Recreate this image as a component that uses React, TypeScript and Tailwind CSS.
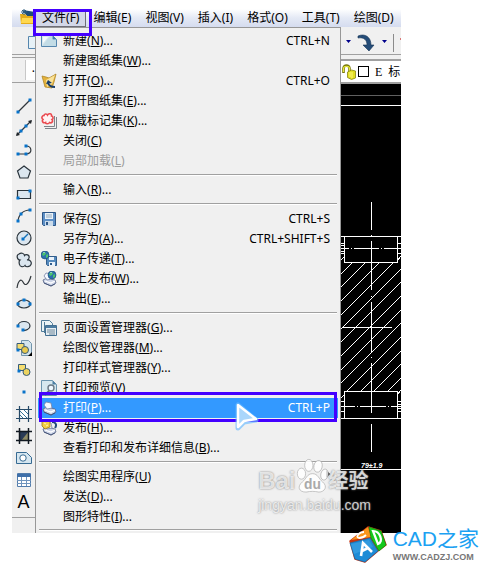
import React from 'react';

interface MenuEntry {
  label: string;
  accessKey: string;
  suffix?: string;
  shortcut?: string;
  icon?: React.ReactNode;
  disabled?: boolean;
  active?: boolean;
  submenu?: boolean;
}

interface Tool {
  name: string;
  icon: React.ReactNode;
}

const topMenus = [
  { label: '文件', accessKey: 'F' },
  { label: '编辑', accessKey: 'E' },
  { label: '视图', accessKey: 'V' },
  { label: '插入', accessKey: 'I' },
  { label: '格式', accessKey: 'O' },
  { label: '工具', accessKey: 'T' },
  { label: '绘图', accessKey: 'D' },
];

const Printer = () => (
  <>
    <path d="M2 9l4-2 8 2 1 3-5 3-7-3z" fill="#cdd5e8" stroke="#536184" strokeWidth=".8" />
    <path d="M3 5l2-3 5 1 1 5-5 1z" fill="#f5f8ff" stroke="#7583a6" strokeWidth=".8" />
    <path d="M4 10l6 2 4-2" fill="none" stroke="#fff" strokeWidth="1.2" />
    <path d="M3 12l7 3 4-2" fill="none" stroke="#3a4a70" strokeWidth=".8" />
  </>
);

const Globe = ({ x, y }: { x: number; y: number }) => (
  <g transform={`translate(${x} ${y})`}>
    <circle cx="4" cy="4" r="4" fill="#2d6fb0" stroke="#174b74" strokeWidth="0.6" />
    <path d="M1 3l2-2 2 1-1 2-2 1zM5 4l2-1v3l-2 1z" fill="#4cc36a" />
    <path d="M2 2l1-1 1 1z" fill="#dff5ff" />
  </g>
);

const NewIcon = () => (
  <>
    <path d="M.5 2.5h11l4 4v7H.5z" fill="#d9e9ef" stroke="#5586ae" />
    <path d="M1 13L9 3h2v4h4v6z" fill="#c2dce6" />
    <path d="M11.5 2.5v4h4z" fill="#3f7cad" />
    <path d="M2 4h5l-5 6z" fill="#f6fbfc" />
  </>
);

const OpenIcon = () => (
  <>
    <path d="M1 3l4 1 3 1 7-4-2 8-2 6-7-1z" fill="#e3b23c" stroke="#b1882a" strokeWidth=".8" />
    <path d="M5 7l9-5-3 9-5 3z" fill="#f9e29a" />
    <path d="M7 10c1 3 4 4 7 4" fill="none" stroke="#173d6b" strokeWidth="2" />
    <path d="M5 11l2-4 4 3z" fill="#173d6b" />
  </>
);

const MarkupIcon = () => (
  <>
    <path d="M4 15.5h11.500V4M3 13.5h10.500V3" fill="none" stroke="#7d848b" />
    <path
      d="M3 2.500c0-2 3-2 3.500-.5C8 0 11 .5 10.500 3c2 .5 2 3 .5 3.500 1.500 2-.5 4-2.500 3-1 2-4 1.500-4 0-2.500 1-4-1.500-2.500-3C0 5 1 2.500 3 2.500z"
      fill="#fff3f3"
      stroke="#ea4a50"
      strokeWidth="1.6"
    />
  </>
);

const SaveIcon = () => (
  <>
    <path d="M1.500 1.500h13v13h-12l-1-1z" fill="#5d8fc6" stroke="#2d5687" />
    <path d="M4 2h8v6H4z" fill="#eaf2f8" />
    <path d="M5 4h6M5 6h6" stroke="#91a9bf" />
    <path d="M4 10h8v5H4z" fill="#cbdbea" />
    <path d="M5 11h2v3H5z" fill="#2d5687" />
  </>
);

const TransmitIcon = () => (
  <>
    <path d="M5.500 5.500h10v9h-9l-1-1z" fill="#558abd" stroke="#315d8c" />
    <path d="M8 6h5v3H8zM8 11h6v4H8z" fill="#e9f2fa" />
    <path d="M9 12h2v2H9z" fill="#315d8c" />
    <Globe x={0} y={0} />
  </>
);

const WebIcon = () => (
  <>
    <Printer />
    <Globe x={7} y={0} />
  </>
);

const PageSetupIcon = () => (
  <>
    <path d="M.5.5h8l3 3v8H.5z" fill="#e9f3f6" stroke="#4f7b99" />
    <path d="M3.500 13V2" stroke="#4f7b99" />
    <path d="M4.500 5.500h11v10h-11z" fill="#e5edf2" stroke="#426f92" />
    <path d="M5 6h10v2H5z" fill="#4b7ca1" />
    <path d="M6 10h8M6 12h8M8 14h6" stroke="#6d879a" />
  </>
);

const PreviewIcon = () => (
  <>
    <path d="M.5.5h11l4 4v11H.5z" fill="#d6e8ef" stroke="#6a94ae" />
    <path d="M11.500.5v4h4z" fill="#4c7fa3" />
    <circle cx="10" cy="8" r="3" fill="#eef8ff" stroke="#6b7986" strokeWidth="1.400" />
    <path d="M8 11l-4 4" stroke="#596976" strokeWidth="2" />
  </>
);

const PublishIcon = () => (
  <>
    <Printer />
    <path d="M1 1l5-1 3 2 0 5-5 2-3-3z" fill="#f3cf45" stroke="#9c7811" strokeWidth=".8" />
    <path d="M3 3l2 1M5 6l2-1" stroke="#fff6b1" />
    <path d="M11 2c4 0 5 3 3 6" fill="none" stroke="#234a7c" strokeWidth="2" />
  </>
);

const menuGroups: MenuEntry[][] = [
  [
    { label: '新建', accessKey: 'N', suffix: '...', shortcut: 'CTRL+N', icon: <NewIcon /> },
    { label: '新建图纸集', accessKey: 'W', suffix: '...' },
    { label: '打开', accessKey: 'O', suffix: '...', shortcut: 'CTRL+O', icon: <OpenIcon /> },
    { label: '打开图纸集', accessKey: 'E', suffix: '...' },
    { label: '加载标记集', accessKey: 'K', suffix: '...', icon: <MarkupIcon /> },
    { label: '关闭', accessKey: 'C' },
    { label: '局部加载', accessKey: 'L', disabled: true },
  ],
  [{ label: '输入', accessKey: 'R', suffix: '...' }],
  [
    { label: '保存', accessKey: 'S', shortcut: 'CTRL+S', icon: <SaveIcon /> },
    { label: '另存为', accessKey: 'A', suffix: '...', shortcut: 'CTRL+SHIFT+S' },
    { label: '电子传递', accessKey: 'T', suffix: '...', icon: <TransmitIcon /> },
    { label: '网上发布', accessKey: 'W', suffix: '...', icon: <WebIcon /> },
    { label: '输出', accessKey: 'E', suffix: '...' },
  ],
  [
    { label: '页面设置管理器', accessKey: 'G', suffix: '...', icon: <PageSetupIcon /> },
    { label: '绘图仪管理器', accessKey: 'M', suffix: '...' },
    { label: '打印样式管理器', accessKey: 'Y', suffix: '...' },
    { label: '打印预览', accessKey: 'V', icon: <PreviewIcon /> },
    { label: '打印', accessKey: 'P', suffix: '...', shortcut: 'CTRL+P', icon: <Printer />, active: true },
    { label: '发布', accessKey: 'H', suffix: '...', icon: <PublishIcon /> },
    { label: '查看打印和发布详细信息', accessKey: 'B', suffix: '...' },
  ],
  [
    { label: '绘图实用程序', accessKey: 'U', submenu: true },
    { label: '发送', accessKey: 'D', suffix: '...' },
    { label: '图形特性', accessKey: 'I', suffix: '...' },
  ],
];

// small blue grip squares used by most of the draw tools
const Grips = ({ at }: { at: number[][] }) => (
  <>
    {at.map(([x, y]) => (
      <rect key={`${x}-${y}`} x={x - 1.5} y={y - 1.5} width="3" height="3" fill="#0873c9" />
    ))}
  </>
);

const line = { fill: 'none', stroke: '#30363b', strokeWidth: 1.2 };
const shape = { fill: '#dbe6ef', stroke: '#29333b', strokeWidth: 1.2 };

const tools: Tool[] = [
  { name: '直线', icon: <><path d="M2 14L14 2" {...line} /><Grips at={[[2, 14], [14, 2]]} /></> },
  { name: '构造线', icon: <><path d="M1 15L15 1" {...line} /><path d="M0 16l1-4 3 3zM16 0l-4 1 3 3z" fill="#20262a" /><Grips at={[[5, 11], [10, 6]]} /></> },
  { name: '多段线', icon: <><path d="M2 12h8c7 0 6-8 0-8" {...line} /><Grips at={[[2, 12], [10, 12], [10, 4]]} /></> },
  { name: '正多边形', icon: <path d="M8 2l6.500 5-2.500 7H4L1.500 7z" {...shape} /> },
  { name: '矩形', icon: <><path d="M1.500 4.500h13v8h-13z" {...shape} /><Grips at={[[2, 12], [14, 5]]} /></> },
  { name: '圆弧', icon: <><path d="M2 14C2 7 7 2 14 2" {...line} /><Grips at={[[2, 13], [5, 6], [14, 2]]} /></> },
  { name: '圆', icon: <><circle cx="8" cy="8" r="7" {...shape} /><path d="M8 8l4-4" stroke="#1672b7" strokeWidth="1.500" /><Grips at={[[7, 9]]} /></> },
  {
    name: '修订云线',
    icon: <path d="M4 8C1 8 0 3 3 2c2-1.500 5-1 5.500 1.500C10 1.500 14 3 13 6c-.3 1.500-1 2-2 2 3-.5 5 2 4 4.500-1 2.500-5 3-6 1-1.500 2-5 1.500-5.500-1C3 11 3 9 4 8z" {...shape} />,
  },
  { name: '样条曲线', icon: <path d="M1 14C2 7 5 4 7 8s5 4 8-6" {...line} /> },
  { name: '椭圆', icon: <><ellipse cx="8" cy="8" rx="6.500" ry="4" {...shape} /><Grips at={[[2, 8], [8, 4], [14, 8]]} /></> },
  { name: '椭圆弧', icon: <><path d="M2 8c0-6 12-6 12 0 0 3-4 5-8 4" {...shape} /><Grips at={[[2, 8], [7, 12]]} /></> },
  {
    name: '插入块',
    icon: <><path d="M5.500.5h7l3 3v12h-10z" fill="#d4e5ee" stroke="#7294ab" /><path d="M1 3.500h7v6H1z" fill="#f5dd70" stroke="#365b79" /><circle cx="9" cy="10" r="3.500" fill="#e9ca4c" stroke="#365b79" /><Grips at={[[2, 10]]} /><path d="M16 12v4h-4z" fill="#000" /></>,
  },
  { name: '创建块', icon: <><path d="M2.500 2.500h7v6h-7z" fill="#f5dd70" stroke="#365b79" /><circle cx="10.500" cy="10" r="3.500" fill="#ecd35f" stroke="#365b79" /><Grips at={[[3, 9]]} /></> },
  { name: '点', icon: <Grips at={[[8, 8]]} /> },
  { name: '图案填充', icon: <><path d="M3 3h10v10H3z" fill="#fff" /><path d="M3 4l9 9M3 8l5 5M7 3l6 6M3 12l1 1M11 3l2 2" stroke="#34759c" /><path d="M3.500 0v16M12.500 0v16M0 3.500h16M0 12.500h16" {...line} stroke="#254967" /></> },
  { name: '渐变色', icon: <><path d="M3 3h10v10H3z" fill="#293b56" /><path d="M13 3v10H5z" fill="#8f8c66" /><path d="M3.500 0v16M12.500 0v16M0 3.500h16M0 12.500h16" stroke="#101820" strokeWidth="1.500" /></> },
  { name: '面域', icon: <><path d="M.5 2.500h10l5 5v6H.5z" fill="#d5e6f0" stroke="#376b93" /><circle cx="7" cy="8" r="3.200" fill="#fff" stroke="#376b93" /></> },
  { name: '表格', icon: <><path d="M1.500 1.500h13v13h-13z" fill="#fff" stroke="#527cab" /><path d="M1 2h14v3H1z" fill="#3f70aa" /><path d="M1 8.500h14M1 11.500h14M5.500 5v9M10.500 5v9" stroke="#6f94bd" /></> },
];

const hatchSums = [601, 615, 628, 642, 656, 670, 683, 697, 711, 724, 738, 752, 765, 779];

function MenuRow({ entry }: { entry: MenuEntry }) {
  return (
    <li className="relative mx-[2px]">
      <button
        type="button"
        disabled={entry.disabled}
        className={`flex h-5 w-full items-center gap-1.5 pl-[3px] pr-2 text-left whitespace-nowrap ${
          entry.active ? 'bg-[#3399ff] text-white' : entry.disabled ? 'text-[#9d9d9d]' : 'text-black'
        }`}
      >
        <svg viewBox="0 0 16 16" className="size-4 shrink-0" aria-hidden="true">
          {entry.icon}
        </svg>
        <span className="flex-1">
          {entry.label}(<u className="underline-offset-1">{entry.accessKey}</u>){entry.suffix}
        </span>
        {entry.shortcut && <span>{entry.shortcut}</span>}
        {entry.submenu && (
          <svg viewBox="0 0 4 8" className="mb-1.5 h-2 w-1" aria-hidden="true">
            <path d="M0 0l4 4-4 4z" />
          </svg>
        )}
      </button>
      {entry.active && (
        <>
          <div className="pointer-events-none absolute inset-x-px -top-1.5 -bottom-1 z-10 border-3 border-[#4400ff]" />
          <svg viewBox="0 0 28 32" className="absolute top-1 right-[76px] z-20 h-8 w-7" aria-hidden="true">
            <path d="M4 3v23l6-6 12-2z" fill="none" stroke="#69baff" strokeWidth="5" strokeLinejoin="round" opacity=".65" />
            <path d="M4 3v22l6-6 12-2z" fill="#a9d6fb" stroke="#fff" strokeWidth="2.500" strokeLinejoin="round" />
          </svg>
        </>
      )}
    </li>
  );
}

function FileMenu() {
  return (
    <div className="min-w-0 flex-1 border-x border-t border-[#979797] bg-[#f0f0f0] pt-[3px]">
      {menuGroups.map((group, index) => (
        <React.Fragment key={index}>
          <ul>
            {group.map((entry) => (
              <MenuRow key={entry.label} entry={entry} />
            ))}
          </ul>
          <div className={index === menuGroups.length - 1 ? 'h-1.5 px-[3px] pt-0.5' : 'h-[9px] px-[3px] pt-[3px]'}>
            <div className="h-0.5 border-t border-b border-t-[#a0a0a0] border-b-white" />
          </div>
        </React.Fragment>
      ))}
    </div>
  );
}

function ToolPalette() {
  return (
    <div className="flex w-[23px] shrink-0 flex-col bg-[#f0f0f0]">
      <div className="flex h-7 items-center justify-end border-b border-[#a0a0a0] pt-1">
        <svg viewBox="0 0 7 14" className="h-3.5 w-[7px]" aria-hidden="true">
          <path d="M7 .5H.5v12H7" fill="#e6f1f6" stroke="#5586ae" />
        </svg>
      </div>
      <div className="mt-0.5 flex h-[26px] items-center justify-end border-y border-[#a0a0a0]">
        <div className="h-5 w-2.5 border-l border-[#c8c8c8] bg-white text-right leading-4">.</div>
      </div>
      <div className="flex flex-col items-center border-b border-[#a0a0a0] pt-3 pb-1">
        {tools.map(({ name, icon }) => (
          <button key={name} type="button" aria-label={name} className="flex h-[22px] items-center">
            <svg viewBox="0 0 16 16" className="size-4">
              {icon}
            </svg>
          </button>
        ))}
        <button type="button" className="h-[22px] font-['Liberation_Sans',sans-serif] text-lg leading-[22px]">
          A
        </button>
      </div>
    </div>
  );
}

function Drawing() {
  return (
    <svg viewBox="341 84 60 449" className="h-[449px] w-full" preserveAspectRatio="xMidYMin slice" shapeRendering="crispEdges">
      <defs>
        <clipPath id="hatch">
          <path d="M341 262h60v129h-60z" />
        </clipPath>
      </defs>
      <path d="M341 84h60v449h-60z" />
      <path d="M341 95.500h60" stroke="#606060" />
      <g fill="none" stroke="#fff">
        <path d="M341 105.500h60M341 236.500h60M341 418.500h60M341 469.500h60" />
        <path d="M344.500 236v26.500h53V236M344.500 418v-26.500h53V418" />
        <path d="M371.500 202v28M371.500 235v1M371.500 241v49M371.500 296v1M371.500 302v50M371.500 357v1M371.500 363v50M371.500 424v28" />
        <path d="M341 248.500h8M351 248.500h1M354 248.500h25M381 248.500h1M384 248.500h17" />
        <path d="M341 406.500h14M357 406.500h1M360 406.500h26M388 406.500h1M391 406.500h10" />
        <path d="M342 327.500h50" />
        <path d="M341 243.500h3M341 245.500h3M341 251.500h3M341 253.500h3M398 243.500h3M398 253.500h3" />
        <path d="M341 401.500h3M341 411.500h3M398 401.500h3M398 404.500h3M398 408.500h3M398 411.500h3" />
        <path d="M341 260l3-3M398 260l3-4M341 398l3-3M398 394l3-4" />
        <g clipPath="url(#hatch)">
          {hatchSums.map((sum) => (
            <path key={sum} d={`M341 ${sum - 341}L401 ${sum - 401}`} />
          ))}
        </g>
      </g>
      <text x="361" y="468" fill="#fff" className="font-['Liberation_Sans',sans-serif] text-[7px] font-bold italic">
        79±1.9
      </text>
    </svg>
  );
}

function RightSide() {
  return (
    <div className="w-[60px] shrink-0 overflow-hidden bg-[#f0f0f0]">
      <div className="flex h-7 items-center border-b border-[#a0a0a0] pt-1 pl-[5px]">
        <svg viewBox="0 0 55 20" className="h-5 w-[55px]" aria-label="重做">
          <path d="M0 7h5l-2.500 3zM36 7h5l-2.500 3z" fill="#00008b" />
          <path d="M12 3c7-3 13 1 13 9h3l-5 6-6-6h4c0-5-3-8-9-7z" fill="#244c78" stroke="#163454" strokeWidth=".6" />
          <path d="M47.500 1v18" stroke="#8b8b8b" />
          <path d="M55 5v2" stroke="#d87777" strokeWidth="2" />
        </svg>
      </div>
      <div className="mt-1 flex h-[25px] items-center gap-0.5 border-t-2 border-b-2 border-[#a0a0a0] bg-white pl-px">
        <svg viewBox="0 0 14 16" className="h-4 w-3.5 shrink-0" aria-hidden="true">
          <path d="M1.500 9V4.500c0-4 6-4 6 0V8" fill="none" stroke="#77770a" strokeWidth="2.600" />
          <path d="M1.500 8V4.500c0-3 6-3 6 0V8" fill="none" stroke="#e9e93b" strokeWidth="1.200" />
          <path d="M5.500 8l4-2 4 1v7l-4 1.500-4-2z" fill="#e2df21" stroke="#8a8710" strokeWidth=".8" />
          <path d="M8 8v5M10 8v6" stroke="#fff77d" />
        </svg>
        <div className="size-[11px] shrink-0 border border-black bg-white" />
        <span className="px-1 font-['Liberation_Serif',serif]">E</span>
        <span>标</span>
      </div>
      <Drawing />
    </div>
  );
}

function Watermark() {
  return (
    <div className="pointer-events-none absolute right-[30px] bottom-5 z-30 font-['Liberation_Sans','Noto_Sans_CJK_SC',sans-serif] whitespace-nowrap text-white/75 [text-shadow:0_0_2px_#777]">
      <div className="flex h-9 items-end">
        <span className="text-2xl leading-6 font-bold">Bai</span>
        <svg viewBox="0 0 34 38" className="h-[35px] w-[33px]">
          <g fill="#fff" fillOpacity=".85" stroke="#aaa" strokeWidth=".7">
            <ellipse cx="5" cy="17" rx="4.500" ry="6" />
            <ellipse cx="13" cy="8" rx="4.500" ry="6.500" />
            <ellipse cx="23" cy="9" rx="4.500" ry="6.500" transform="rotate(12 23 9)" />
            <ellipse cx="30" cy="18" rx="4" ry="6" transform="rotate(12 30 18)" />
            <path d="M17 17c6 0 7 6 11 9 6 5 2 11-4 11-5-1-9-1-14 0-8 0-10-6-4-11 4-3 5-9 11-9z" />
          </g>
          <text x="17" y="34" textAnchor="middle" fill="#aaa" className="text-[15px] font-bold [text-shadow:none]">
            du
          </text>
        </svg>
        <span className="text-xl leading-6 font-bold">经验</span>
      </div>
      <div className="pt-1 text-sm leading-4">jingyan.baidu.com</div>
    </div>
  );
}

function SiteLogo() {
  return (
    <a href="#" className="relative z-30 -mt-2 mr-[5px] flex items-center justify-end gap-1.5 font-['Liberation_Sans','Noto_Sans_CJK_SC',sans-serif]">
      <svg viewBox="0 0 38 37" className="h-[37px] w-[38px] shrink-0" aria-hidden="true">
        <path d="M1 15L19 1l13 4 5 14-8 6-13 11-10-3z" fill="#c8330e" stroke="#c8330e" strokeWidth="1.500" strokeLinejoin="round" />
        <path d="M2 14L19 1l3 10z" fill="#f9951c" />
        <path d="M20 1l12 4 5 14-7 6-8-13z" fill="#14c91b" stroke="#0a8d10" strokeWidth=".6" />
        <path d="M1 17l20-5 8 13-13 11-10-3z" fill="#1d8bd6" stroke="#0f6cae" strokeWidth=".6" />
        <path d="M2 18l18-4 4 7-19 7z" fill="#43a8e8" opacity=".55" />
        <path d="M15 6c-5 0-9 5-5 6 3 0 5-1 7-3" fill="none" stroke="#fff" strokeWidth="1.800" />
        <path d="M24 5l5 13c6-2 2-13-5-13z" fill="none" stroke="#fff" strokeWidth="2.200" />
        <path d="M12 30l2-13 9 9M13 25l6-3" fill="none" stroke="#fff" strokeWidth="2.600" />
      </svg>
      <span className="flex flex-col items-start pt-0.5 whitespace-nowrap">
        <span className="text-[21px] leading-6 text-[#1ba1f2]">CAD之家</span>
        <span className="text-[9px] leading-3 font-bold text-[#777]">WWW.CADZJ.COM</span>
      </span>
    </a>
  );
}

export default function App() {
  return (
    <div className="overflow-hidden bg-white pt-[9px] font-['Noto_Sans','Noto_Sans_CJK_SC',sans-serif] text-xs">
      <div className="relative mr-[83px] ml-3">
        <nav className="flex h-[18px] bg-linear-to-b from-white via-[#e4e9f5] to-[#d5dcef]">
          <div className="flex w-[23px] shrink-0 justify-end">
            <svg viewBox="0 0 15 16" className="h-4 w-[15px]" aria-hidden="true">
              <path d="M3 1l12 2v10l-9-7z" fill="#1f4e77" />
              <path d="M0 5h5l2 2h8v8H1z" fill="#e5ac19" />
              <path d="M2 9h13v5H1z" fill="#ffd84f" />
              <path d="M4 0v6M1 3h6M2 1l4 4M6 1L2 5" stroke="#315f81" />
            </svg>
          </div>
          {topMenus.map(({ label, accessKey }, index) => (
            <div key={label} className="relative shrink-0">
              <button
                type="button"
                className={`h-[18px] border px-1.5 leading-4 whitespace-nowrap ${
                  index === 0 ? 'border-[#6e6e78] bg-[#d3d8e8]' : 'border-transparent'
                }`}
              >
                {label}({accessKey})
              </button>
              {index === 0 && (
                <div className="pointer-events-none absolute top-0 -right-1.5 -bottom-[9px] -left-0.5 z-10 border-3 border-[#4400ff]" />
              )}
            </div>
          ))}
        </nav>
        <div className="flex">
          <ToolPalette />
          <FileMenu />
          <RightSide />
        </div>
        <Watermark />
      </div>
      <SiteLogo />
    </div>
  );
}
